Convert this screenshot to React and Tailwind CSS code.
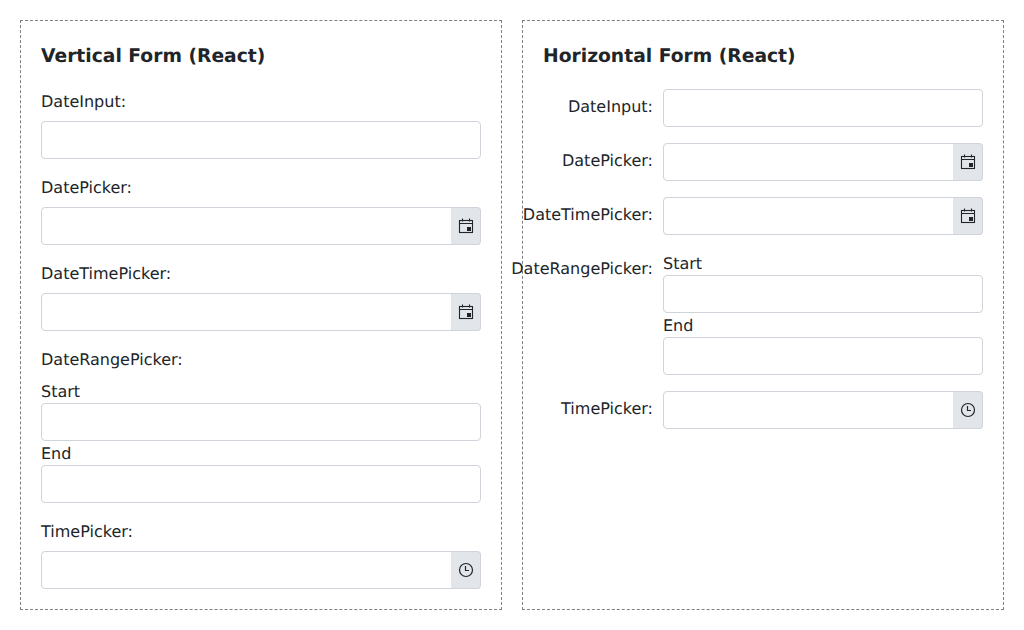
import React from "react";

const CalendarIcon = () => (
  <svg width="16" height="16" viewBox="0 0 16 16" fill="none" stroke="#212529" strokeWidth="1.1">
    <rect x="1.5" y="2.5" width="13" height="12" />
    <path d="M1.5 5.5h13M4.5 0.5v3M11.5 0.5v3" />
    <rect x="9" y="9" width="4" height="4" fill="#212529" stroke="none" />
  </svg>
);

const ClockIcon = () => (
  <svg width="16" height="16" viewBox="0 0 16 16" fill="none" stroke="#212529" strokeWidth="1.2">
    <circle cx="8" cy="8" r="6.5" />
    <path d="M7.5 4v4.5h3.5" />
  </svg>
);

const Input = () => (
  <input type="text" className="block w-full h-[38px] px-3 bg-white border border-[#ced4da] rounded outline-none" />
);

const AddonInput = ({ icon }) => (
  <div className="flex w-full h-[38px]">
    <input type="text" className="flex-1 min-w-0 px-3 bg-white border border-[#ced4da] rounded-l outline-none" />
    <span className="w-[30px] -ml-px flex items-center justify-center bg-[#e2e5ea] border border-[#ced4da] border-l-0 rounded-r">
      {icon}
    </span>
  </div>
);

const RangeInputs = () => (
  <div className="flex flex-col w-full">
    <span className="h-6 leading-[26px]">Start</span>
    <Input />
    <span className="h-6 leading-[26px]">End</span>
    <Input />
  </div>
);

const fields = [
  { label: "DateInput:", control: <Input /> },
  { label: "DatePicker:", control: <AddonInput icon={<CalendarIcon />} /> },
  { label: "DateTimePicker:", control: <AddonInput icon={<CalendarIcon />} /> },
  { label: "DateRangePicker:", control: <RangeInputs /> },
  { label: "TimePicker:", control: <AddonInput icon={<ClockIcon />} /> },
];

const Panel = ({ title, children }) => (
  <div className="flex-1 h-[590px] p-5 border border-dashed border-[#808080]">
    <h2 className="h-7 text-[18.72px] leading-8 font-bold mb-5">{title}</h2>
    <div className="flex flex-col gap-4">{children}</div>
  </div>
);

export default function App() {
  return (
    <div className="flex gap-5 p-5 w-[1024px] h-[630px] bg-white text-[#212529] text-base [text-rendering:geometricPrecision] font-['DejaVu_Sans',sans-serif]">
      <Panel title="Vertical Form (React)">
        {fields.map((f) => (
          <div key={f.label}>
            <label className="block h-6 leading-[26px] mb-2">{f.label}</label>
            {f.control}
          </div>
        ))}
      </Panel>
      <Panel title="Horizontal Form (React)">
        {fields.map((f) => (
          <div key={f.label} className="flex gap-2.5">
            <label className="flex justify-end w-[110px] shrink-0 h-6 mt-[6px] leading-6 whitespace-nowrap">
              <span className="shrink-0">{f.label}</span>
            </label>
            <div className="flex-1 min-w-0">{f.control}</div>
          </div>
        ))}
      </Panel>
    </div>
  );
}
